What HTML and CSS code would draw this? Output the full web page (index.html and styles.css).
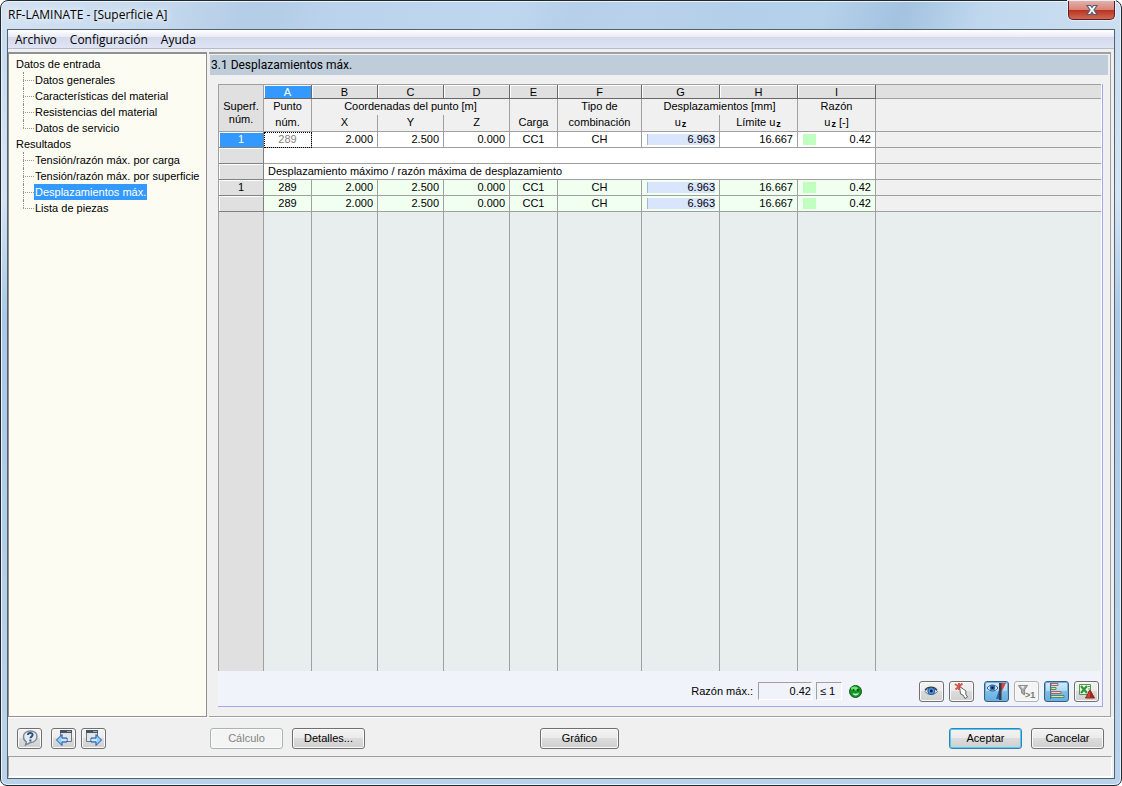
FILE: index.html
```html
<!DOCTYPE html>
<html lang="es">
<head>
<meta charset="utf-8">
<title>RF-LAMINATE - [Superficie A]</title>
<link rel="stylesheet" href="styles.css">
</head>
<body>
<div class="window">
  <header class="titlebar">
    <h1 class="caption">RF-LAMINATE - [Superficie A]</h1>
    <button class="close" aria-label="Cerrar">
      <svg width="14" height="12" viewBox="0 0 14 12"><path d="M2 1.500h3.500l1.500 2 1.500-2H12L9 6l3 4.500H8.500L7 8.300l-1.500 2.200H2L5 6z" fill="#fff" stroke="#555d72" stroke-width="1.200"/></svg>
    </button>
  </header>

  <div class="client">
    <nav class="menubar">
      <button>Archivo</button>
      <button>Configuración</button>
      <button>Ayuda</button>
    </nav>

    <div class="panes">
      <nav class="tree">
        <ul class="roots">
          <li><a href="#">Datos de entrada</a>
            <ul class="branch">
              <li><a href="#">Datos generales</a></li>
              <li><a href="#">Características del material</a></li>
              <li><a href="#">Resistencias del material</a></li>
              <li><a href="#">Datos de servicio</a></li>
            </ul>
          </li>
          <li><a href="#">Resultados</a>
            <ul class="branch">
              <li><a href="#">Tensión/razón máx. por carga</a></li>
              <li><a href="#">Tensión/razón máx. por superficie</a></li>
              <li><a href="#" class="current">Desplazamientos máx.</a></li>
              <li><a href="#">Lista de piezas</a></li>
            </ul>
          </li>
        </ul>
      </nav>

      <main class="content">
        <h2 class="heading">3.1 Desplazamientos máx.</h2>
        <section class="group">
          <div class="grid-wrap">
            <table class="grid">
              <colgroup>
                <col class="c-head"><col class="c-small"><col class="c-mid"><col class="c-mid"><col class="c-mid"><col class="c-small"><col class="c-wide"><col class="c-disp"><col class="c-disp"><col class="c-disp"><col>
              </colgroup>
              <thead>
                <tr class="letters">
                  <th rowspan="3" class="corner">Superf.<br>núm.</th>
                  <th class="picked">A</th><th>B</th><th>C</th><th>D</th><th>E</th><th>F</th><th>G</th><th>H</th><th>I</th><th class="rest"></th>
                </tr>
                <tr class="names">
                  <th>Punto</th><th colspan="3">Coordenadas del punto [m]</th><th></th><th>Tipo de</th><th colspan="2">Desplazamientos [mm]</th><th>Razón</th><th class="rest"></th>
                </tr>
                <tr class="names units">
                  <th>núm.</th><th>X</th><th>Y</th><th>Z</th><th>Carga</th><th>combinación</th><th>u<sub>z</sub></th><th>Límite u<sub>z</sub></th><th>u<sub>z</sub> [-]</th><th class="rest"></th>
                </tr>
              </thead>
              <tbody>
                <tr class="row">
                  <th class="picked">1</th><td class="mid focus">289</td><td>2.000</td><td>2.500</td><td>0.000</td><td class="mid">CC1</td><td class="mid">CH</td><td class="bar">6.963</td><td>16.667</td><td class="ratio">0.42</td><td class="rest"></td>
                </tr>
                <tr class="row"><th></th><td colspan="9"></td><td class="rest"></td></tr>
                <tr class="row"><th></th><td colspan="9" class="note">Desplazamiento máximo / razón máxima de desplazamiento</td><td class="rest"></td></tr>
                <tr class="row extreme">
                  <th>1</th><td class="mid">289</td><td>2.000</td><td>2.500</td><td>0.000</td><td class="mid">CC1</td><td class="mid">CH</td><td class="bar">6.963</td><td>16.667</td><td class="ratio">0.42</td><td class="rest"></td>
                </tr>
                <tr class="row extreme">
                  <th></th><td class="mid">289</td><td>2.000</td><td>2.500</td><td>0.000</td><td class="mid">CC1</td><td class="mid">CH</td><td class="bar">6.963</td><td>16.667</td><td class="ratio">0.42</td><td class="rest"></td>
                </tr>
                <tr class="empty"><th></th><td></td><td></td><td></td><td></td><td></td><td></td><td></td><td></td><td></td><td class="rest"></td></tr>
              </tbody>
            </table>
          </div>

          <div class="summary">
            <label for="max">Razón máx.:</label>
            <input id="max" class="value" value="0.42" readonly>
            <output class="limit">≤ 1</output>
            <svg class="smiley" width="13" height="13" viewBox="0 0 13 13"><circle cx="6.500" cy="6.500" r="6" fill="#139426" stroke="#17551d"/><ellipse cx="5.500" cy="3.500" rx="3.500" ry="2" fill="#6be66c"/><circle cx="4.500" cy="5" r="1" fill="#073e0d"/><circle cx="8.700" cy="5" r="1" fill="#073e0d"/><path d="M3.500 8c2 1 4.500 1 6.500-.5-.4 2-1.700 3-3.300 3S4 9.700 3.500 8z" fill="#c4f5c5"/></svg>
            <div class="tools">
              <button class="btn icon" aria-label="Ver"><svg width="16" height="16" viewBox="0 0 16 16"><path d="M1 8.500C3 4.500 10 3.500 13.500 8.500 10 12.500 4 12.500 1 8.500z" fill="#e8eff8" stroke="#5e6d80"/><circle cx="7.300" cy="8" r="3.500" fill="#4f9be6" stroke="#205993"/><circle cx="7.300" cy="8" r="1.400" fill="#091b32"/><path d="M1 7C4 3 10 3 13 7" fill="none" stroke="#333b46" stroke-width="1.200"/></svg></button>
              <button class="btn icon" aria-label="Seleccionar"><svg width="18" height="18" viewBox="0 0 18 18"><path d="M2 2l7 5M9.500 1.500L2.500 7.500M6 1v7" stroke="#dc5548" stroke-width="2"/><path d="M6.500 4.500L13 9l-.3 3 1.800 3-2.500 1.500-2-3.500-2.500-1z" fill="#fff" stroke="#666"/></svg></button>
              <button class="btn icon on gap" aria-label="Mostrar colores"><svg width="21" height="17" viewBox="0 0 21 17"><path d="M1 5c3-4 8-4 11 0-3 4-8 4-11 0z" fill="#e4eefa" stroke="#45546a"/><circle cx="6.500" cy="4.800" r="2.800" fill="#2c72c0"/><circle cx="6.500" cy="4.800" r="1.200" fill="#061c3a"/><path d="M14 0h6l-4 8h-2z" fill="#e2413b"/><path d="M13 0h2.500v17H13z" fill="#343d49"/><path d="M13 7l-3 9h3z" fill="#2764b3"/></svg></button>
              <button class="btn icon" disabled aria-label="Filtrar mayores que 1"><svg width="20" height="16" viewBox="0 0 20 16"><path d="M1.500 2.500h9L7.500 7v5l-3-2V7z" fill="#a8a8a8" stroke="#8c8c8c"/><path d="M3.500 3h4L6 6z" fill="#ededed"/><text x="8" y="15" class="tiny">&gt;1</text></svg></button>
              <button class="btn icon on" aria-label="Barras de relación"><svg width="20" height="18" viewBox="0 0 20 18"><path d="M3.500 1v16" stroke="#516580"/><path d="M4 1.500h7v2H4zM4 9.500h10v2H4z" fill="#ffd3cc" stroke="#9b6863"/><path d="M4 5.500h5v2H4zM4 13.500h13v2H4z" fill="#c2efbf" stroke="#618366"/></svg></button>
              <button class="btn icon" aria-label="Exportar a Excel"><svg width="18" height="16" viewBox="0 0 18 16"><path d="M1.500 1.500h11v10h-11z" fill="#eaf6e7" stroke="#579555"/><path d="M3 3l6 7M9 3l-6 7" stroke="#2f963a" stroke-width="2.200"/><path d="M10 3.500h2M10 6h2M10 8.500h2" stroke="#57a45a"/><path d="M12 7l4.500 8h-9z" fill="#d74031" stroke="#8e261d"/><path d="M12 7v8h4.500z" fill="#9d2820"/></svg></button>
            </div>
          </div>
        </section>
      </main>
    </div>

    <footer class="actions">
      <button class="btn icon" aria-label="Ayuda"><svg width="18" height="18" viewBox="0 0 18 18"><path d="M9.500 2c4 0 6.500 2.500 6.500 5.500s-2.500 6-6.500 6L4.500 16l.8-3.200C3.500 12 2.500 10 2.500 7.500c0-3.300 3-5.500 7-5.500z" fill="#e5ebf2" stroke="#7b8793" stroke-width="1.400"/><path d="M6.800 6C7 3.200 12 3.300 11.600 6.200c-.2 1.400-2.200 1.500-2.200 3M9.400 10.500v2" fill="none" stroke="#2c5278" stroke-width="1.900"/></svg></button>
      <button class="btn icon gap-s" aria-label="Anterior"><svg width="18" height="18" viewBox="0 0 18 18"><path d="M5.500 1.500h11v11h-11z" fill="#e1e5ea" stroke="#6d7782"/><path d="M5 1h12v3H5z" fill="#465362"/><path d="M12.500 2.500h1m1 0h1" stroke="#fff"/><path d="M1.500 11L7 5.500v3.500h5v4H7v3.500z" fill="#90d0ff" stroke="#1d509c"/><path d="M6 11h6" stroke="#fff"/></svg></button>
      <button class="btn icon" aria-label="Siguiente"><svg width="18" height="18" viewBox="0 0 18 18"><path d="M1.500 1.500h11v11h-11z" fill="#e1e5ea" stroke="#6d7782"/><path d="M1 1h12v3H1z" fill="#465362"/><path d="M8.500 2.500h1m1 0h1" stroke="#fff"/><path d="M16.500 11L11 5.500v3.500H6v4h5v3.500z" fill="#90d0ff" stroke="#1d509c"/><path d="M6 11h6" stroke="#fff"/></svg></button>
      <div class="pair first">
        <button class="btn" disabled>Cálculo</button>
        <button class="btn">Detalles...</button>
      </div>
      <button class="btn graphic">Gráfico</button>
      <div class="pair last">
        <button class="btn default">Aceptar</button>
        <button class="btn">Cancelar</button>
      </div>
    </footer>
    <div class="status"></div>
  </div>
</div>
</body>
</html>
```
FILE: styles.css
```css
* { box-sizing: border-box; }

body {
  margin: 0;
  background: #fff;
  color: #000;
  font: 11px/16px "Liberation Sans", Arial, sans-serif;
}

button, input { font: inherit; color: inherit; }

ul { list-style: none; margin: 0; padding: 0; }

.window {
  display: flex;
  flex-direction: column;
  height: 100vh;
  padding: 0 6px 6px;
  border: 1px solid #22272d;
  border-radius: 8px 8px 7px 7px;
  box-shadow: inset 0 0 0 1px #e9f3fc;
  background:
    linear-gradient(110deg, transparent 0 15%, #9dbcd944 22%, transparent 29% 46%, #9dbcd933 51%, transparent 57% 73%, #8fb2d480 80%, transparent 87%) 0 0 / 100% 29px no-repeat,
    linear-gradient(90deg, #d3e2f2, #b9d1ea 25%, #bfd7ee 45%, #b4cfe9 65%, #b7d3ec 80%, #cddff0) 0 0 / 100% 29px no-repeat,
    linear-gradient(#c6dbf0, #d3e4f4 25%, #a9c9e7 40%, #bad3ec);
}

.titlebar {
  display: flex;
  flex: none;
  justify-content: space-between;
  align-items: flex-start;
  height: 28px;
}

.caption {
  margin: 0;
  padding-left: 1px;
  font: 12px/28px "Open Sans", "Noto Sans", sans-serif;
  text-shadow: 0 0 6px #fff, 0 0 10px #fff;
}

.close {
  display: flex;
  align-items: center;
  justify-content: center;
  width: 47px;
  height: 19px;
  padding: 0;
  border: 1px solid #5d1c24;
  border-top: 0;
  border-radius: 0 0 5px 5px;
  background: linear-gradient(#e5b0a8, #d8857a 48%, #b9301f 50%, #cf6a53);
  box-shadow: 0 0 0 1px #e5effa;
}

.client {
  display: flex;
  flex: 1;
  flex-direction: column;
  min-height: 0;
  border: 1px solid #56616e;
  background: #f0f0f0;
}

.menubar {
  display: flex;
  flex: none;
  gap: 13px;
  height: 19px;
  padding: 0 7px;
  border-bottom: 1px solid #b6bccc;
  background: linear-gradient(#fff, #e9ecf6 38%, #d4daec 40%, #e0e5f5);
}

.menubar button {
  padding: 2px 0 0;
  border: 0;
  background: none;
  font: 12px/16px "Open Sans", "Noto Sans", sans-serif;
}

.panes {
  display: flex;
  flex: 1;
  gap: 2px;
  min-height: 0;
  padding: 3px 3px 0 0;
  border-bottom: 1px solid #fff;
}

.tree {
  flex: none;
  width: 199px;
  padding: 2px 0 0 7px;
  border: 1px solid #909090;
  border-top-width: 2px;
  background: #fcfcf3;
  box-shadow: inset 0 1px #fff;
  white-space: nowrap;
}

.tree a {
  display: inline-block;
  height: 16px;
  color: #000;
  text-decoration: none;
  vertical-align: top;
}

.branch { padding-left: 7px; }

.branch li {
  display: flex;
  height: 16px;
  background-image: linear-gradient(90deg, #999 1px, transparent 1px);
  background-repeat: repeat-x;
  background-position: 0 8px;
  background-size: 2px 1px;
}

.branch li::before {
  content: "";
  flex: none;
  width: 10px;
  border-left: 1px dotted #888;
}

.branch li:last-child::before { height: 8px; }

.branch a { flex: none; padding: 0 1px; background: #fcfcf3; }

.branch li::after { content: ""; flex: 1; background: #fcfcf3; }

.branch a.current { background: #3399ff; color: #fff; }

.content {
  display: flex;
  flex: 1;
  flex-direction: column;
  min-width: 0;
  padding: 1px 2px 9px 1px;
  border: 1px solid #a0a0a0;
  border-top-width: 2px;
  border-left: 0;
}

.heading {
  flex: none;
  margin: 0 0 9px;
  padding-left: 1px;
  background: #bfccda;
  font: 12px/20px Roboto, "Open Sans", sans-serif;
}

.group {
  display: flex;
  flex: 1;
  flex-direction: column;
  min-height: 0;
  margin: 0 5px 0 8px;
  border: 1px solid #a6a6ee;
  border-width: 0 1px 1px 0;
  background: #f0f3fa;
}

.grid-wrap { flex: 1; min-height: 0; border-right: 1px solid #fff; }

.grid {
  width: 100%;
  height: 100%;
  border: 1px solid #a0a0a0;
  border-width: 1px 0 0 1px;
  border-collapse: separate;
  border-spacing: 0;
  table-layout: fixed;
  line-height: 15px;
  white-space: nowrap;
}

.c-head { width: 45px; }
.c-small { width: 48px; }
.c-mid { width: 66px; }
.c-wide { width: 84px; }
.c-disp { width: 78px; }

.grid th, .grid td {
  padding: 0;
  border: 0 solid #a0a0a0;
  border-width: 0 1px 1px 0;
  font-weight: normal;
}

.grid td { padding-right: 4px; background: #fff; text-align: right; }

.grid .letters { height: 14px; line-height: 12px; }

.grid .letters th {
  border-color: #696969;
  background: #e0e0e0;
  box-shadow: inset 1px 1px #fff;
}

.grid .letters .corner {
  padding-top: 9px;
  border-color: #a0a0a0;
  box-shadow: none;
  line-height: 13px;
}

.grid .letters .rest { border-color: #a0a0a0; border-right: 0; box-shadow: none; }

.grid .letters .picked, .grid .row .picked { background: #3399ff; color: #fff; }

.grid .names { height: 16px; }
.grid .names th { border-bottom-width: 0; background: #f0f0f0; line-height: 14px; vertical-align: top; }
.grid .units { height: 17px; }
.grid .units th { border-bottom-width: 1px; }

.grid sub { margin-left: 1px; font-size: 9px; font-weight: bold; line-height: 0; vertical-align: -1px; }

.grid .row { height: 16px; }

.grid .row th {
  border-color: #808080;
  background: #e0e0e0;
  box-shadow: inset 1px 1px #fff;
}

.grid .extreme td { background-color: #f0fff0; }
.grid .mid { padding: 0; text-align: center; }
.grid .note { padding-left: 4px; text-align: left; }
.grid .focus { outline: 1px dotted #000; outline-offset: -1px; color: #888078; }

.grid .bar {
  background-image: linear-gradient(90deg, #a9b6d2 1px, #d9e4fd 1px);
  background-position: 5px 2px;
  background-repeat: no-repeat;
  background-size: 68px 11px;
}

.grid .ratio {
  background-image: linear-gradient(#c0ffc0, #c0ffc0);
  background-position: 5px 2px;
  background-repeat: no-repeat;
  background-size: 13px 11px;
}

.grid .rest, .grid .names .rest { border-right-width: 0; }
.grid .row .rest { background: #f0f0f0; }
.grid .empty th { border-bottom: 0; background: #e0e0e0; }
.grid .empty td { border-bottom: 0; background: #e8eeee; }

.summary {
  display: flex;
  flex: none;
  align-items: center;
  justify-content: flex-end;
  height: 35px;
  padding: 5px 3px 0 0;
}

.value, .limit {
  height: 18px;
  padding: 0 0 0 3px;
  border: 1px solid #a0a0a0;
  border-right-color: #fff;
  border-bottom-color: #fff;
  border-radius: 0;
  background: #f0f3fa;
}

.value { width: 54px; margin: 0 4px 0 5px; text-align: right; }
.limit { width: 26px; line-height: 17px; }
.smiley { margin: 0 57px 0 7px; }

.tools { display: flex; gap: 5px; }

.btn {
  display: flex;
  align-items: center;
  justify-content: center;
  width: 73px;
  height: 21px;
  padding: 0;
  border: 1px solid #707070;
  border-radius: 3px;
  background: linear-gradient(#f3f3f3, #ebebeb 48%, #dcdcdc 50%, #cfcfcf);
  box-shadow: inset 0 0 0 1px #fafafa;
}

.btn:disabled {
  border-color: #adb2b5;
  background: #f4f4f4;
  color: #838383;
}

.icon { flex: none; width: 25px; }
.icon svg { flex: none; }
.gap { margin-left: 5px; }
.tiny { fill: #777; font-size: 9px; font-weight: bold; }

.on {
  border-color: #2c628b;
  background: linear-gradient(#d5ebfa, #a9daf5 48%, #7bbfe9 50%, #68aedd);
  box-shadow: inset 0 0 0 1px #7eacd0;
}

.default { border-color: #3c7fb1; box-shadow: inset 0 0 0 1px #48d0f4; }

.actions {
  display: flex;
  flex: none;
  align-items: center;
  gap: 5px;
  height: 38px;
  padding: 2px 10px 0 9px;
}

.gap-s { margin-left: 4px; }
.pair { display: flex; gap: 9px; }
.first { margin-left: 99px; }
.graphic { width: 79px; margin-left: 170px; }
.last { margin-left: auto; }

.status {
  flex: none;
  height: 22px;
  margin-right: 2px;
  border: 1px solid #a0a0a0;
  border-right-color: #fff;
  border-bottom: 2px solid #fff;
}
```
